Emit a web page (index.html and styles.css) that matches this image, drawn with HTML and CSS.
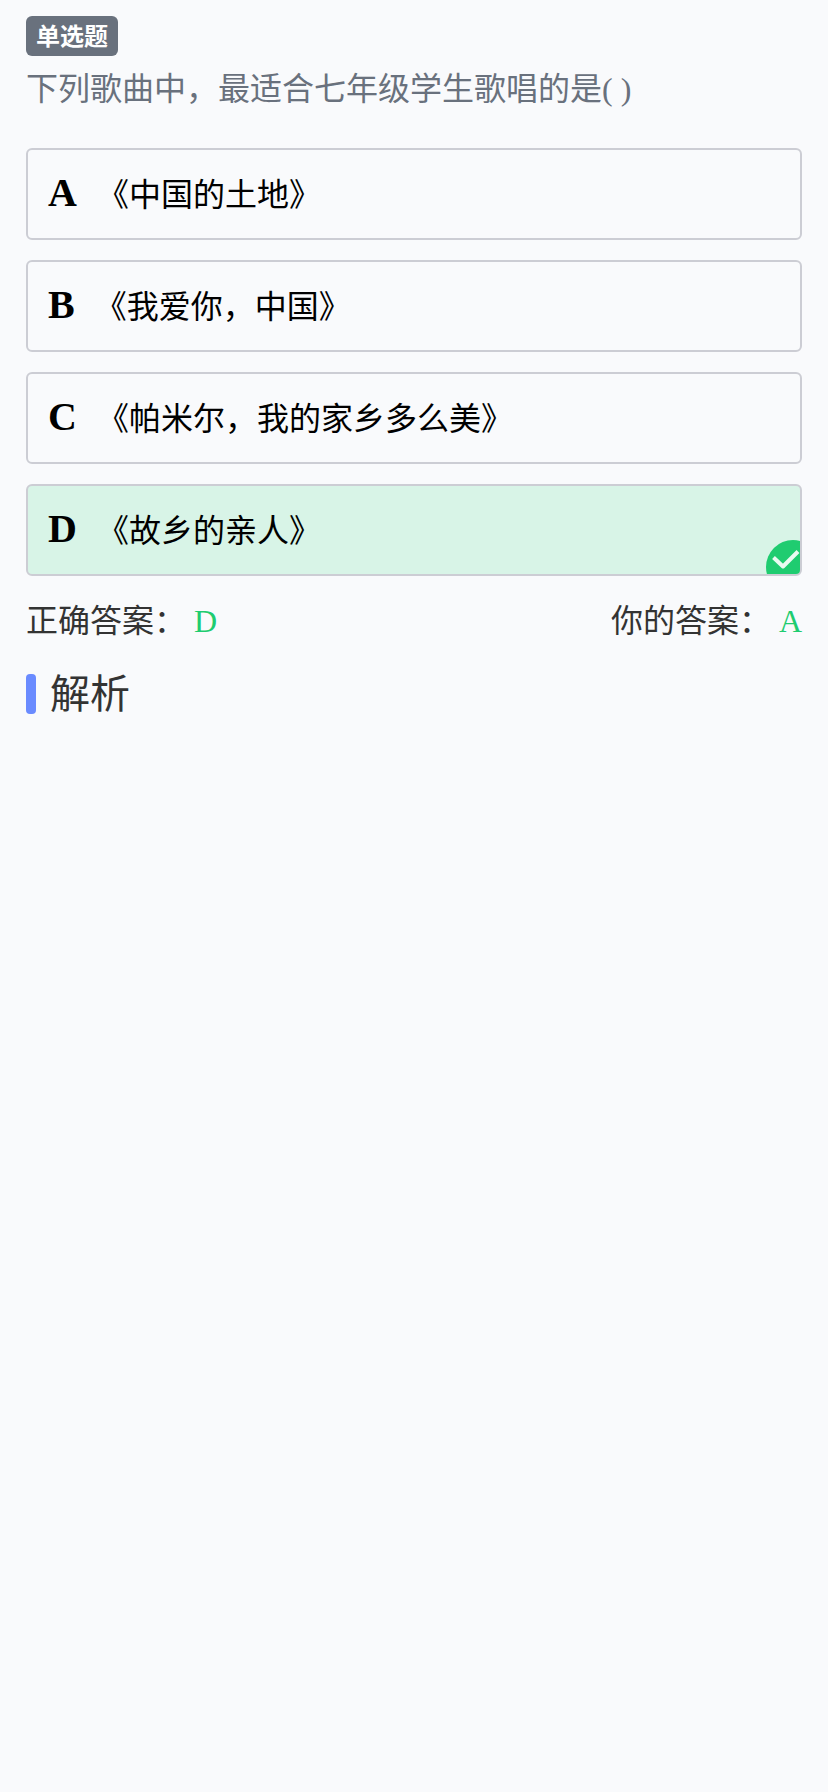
FILE: index.html
```
<!DOCTYPE html>
<html lang="zh-CN">
<head>
    <meta charset="UTF-8">
    <title>单选题</title>
    <link rel="stylesheet" href="styles.css">
</head>
<body>

    <div class="question">
        <span class="tag">单选题</span>
        <div class="title">下列歌曲中，最适合七年级学生歌唱的是( )</div>
    </div>

    <div class="options">
        <div class="option"><b>A</b><span>《中国的土地》</span></div>
        <div class="option"><b>B</b><span>《我爱你，中国》</span></div>
        <div class="option"><b>C</b><span>《帕米尔，我的家乡多么美》</span></div>
        <div class="option right">
            <b>D</b><span>《故乡的亲人》</span>
            <svg class="check" width="34" height="34" viewBox="0 0 34 34">
                <circle cx="27" cy="27" r="27" fill="#1fcc70"/>
                <path class="tick" d="M7.5 17.5L17 26.5L32 11.5"/>
            </svg>
        </div>
    </div>

    <div class="answer">
        <div>正确答案：<span>D</span></div>
        <div>你的答案：<span>A</span></div>
    </div>

    <div class="analysis">解析</div>

</body>
</html>
```

FILE: styles.css
```
body {
    margin: 0;
    padding: 16px 26px;
    background: #f9fafc;
    color: #333;
    font-family: "Liberation Serif", "Noto Sans CJK SC", serif;
    font-size: 32px;
}

.question {
    color: #69717d;
}

.tag {
    display: block;
    box-sizing: border-box;
    width: 92px;
    height: 40px;
    padding: 1px 10px 0;
    border-radius: 6px;
    background: #69717d;
    color: #fff;
    font-size: 24px;
    font-weight: bold;
    line-height: 40px;
}

.title {
    margin-top: 9px;
    line-height: 48px;
}

.options {
    display: flex;
    flex-direction: column;
    gap: 20px;
    margin-top: 35px;
}

.option {
    position: relative;
    display: flex;
    align-items: center;
    gap: 20px;
    box-sizing: border-box;
    height: 92px;
    padding: 0 20px;
    border: 2px solid #cccdd4;
    border-radius: 6px;
    overflow: hidden;
    color: #000;
}

.option b {
    padding-bottom: 2px;
    font-size: 40px;
    line-height: 46px;
}

.option span {
    padding-top: 2px;
    line-height: 46px;
}

.option.right {
    background: #d8f4e7;
}

.check {
    position: absolute;
    right: 0;
    bottom: 0;
}

.tick {
    fill: none;
    stroke: #e9faf1;
    stroke-width: 4;
    stroke-linejoin: round;
    filter: blur(0.5px);
}

.answer {
    display: flex;
    justify-content: space-between;
    margin-top: 22px;
    line-height: 46px;
}

.answer span {
    margin-left: 8px;
    color: #1fcc70;
}

.analysis {
    display: flex;
    align-items: center;
    gap: 14px;
    margin-top: 22px;
    font-size: 40px;
    line-height: 58px;
}

.analysis::before {
    content: "";
    width: 10px;
    height: 40px;
    margin-bottom: 2px;
    border-radius: 4px;
    background: #6a8bff;
}
```
